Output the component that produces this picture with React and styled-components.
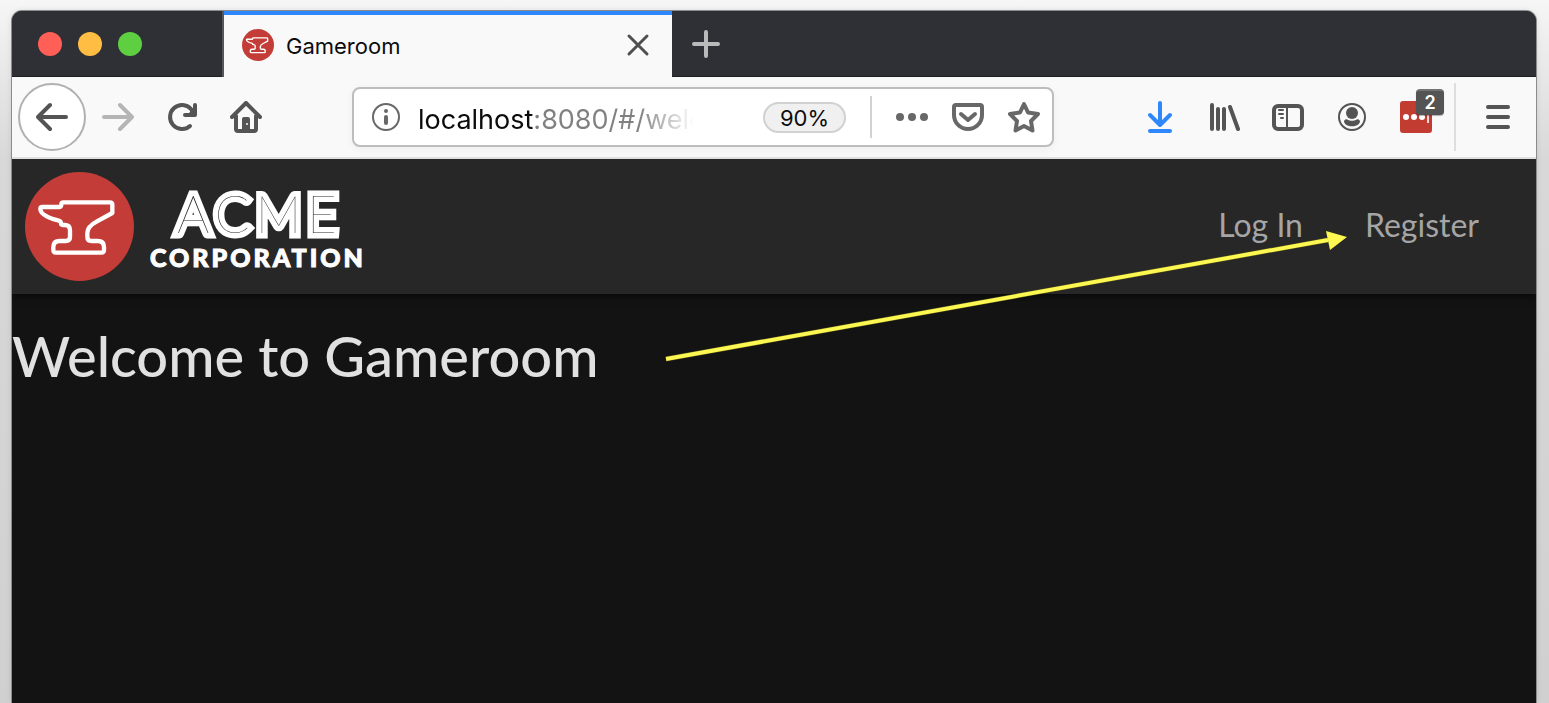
import React from "react";
import styled, { createGlobalStyle } from "styled-components";

const ui = `Inter, "Liberation Sans", sans-serif`;
const site = `Lato, "Liberation Sans", sans-serif`;

const GlobalStyle = createGlobalStyle`
  *, *::before, *::after { box-sizing: border-box; }
  body { margin: 0; background: #fafafa; }
  button { border: 0; margin: 0; padding: 0; background: none; font: inherit; color: inherit; }
  svg { display: block; }
`;

const Desktop = styled.div`
  display: flex;
  min-height: 100vh;
  padding: 11px 13px 0 12px;
  overflow: hidden;
  background: linear-gradient(180deg, #f6f6f6 0, #ececec 50px, #d8d8d8 160px, #d0d0d0 100%);
`;

const BrowserWindow = styled.div`
  position: relative;
  flex: 1;
  min-width: 0;
  display: flex;
  flex-direction: column;
  border-radius: 10px 10px 0 0;
  background: #131313;
  box-shadow: 0 0 0 1px #8c8c8c, 0 0 6px rgba(0, 0, 0, 0.12);
`;

const TabBar = styled.div`
  display: flex;
  height: 66px;
  overflow: hidden;
  border-radius: 10px 10px 0 0;
  background: #2f3035;
  box-shadow: inset 0 -1px #1f2024;
`;

const TrafficLights = styled.div`
  display: flex;
  align-items: center;
  gap: 16px;
  width: 212px;
  padding-left: 26px;
  border-right: 2px solid #55565b;
`;

const Light = styled.button`
  width: 24px;
  height: 24px;
  border-radius: 50%;
  background: ${(p) => p.$color};
`;

const Tab = styled.div`
  display: flex;
  align-items: center;
  gap: 12px;
  width: 448px;
  padding: 0 18px 2px;
  border-top: 4px solid #2e87fb;
  background: #f9f9fa;
  color: #0c0c0d;
  font: 22px/32px ${ui};
`;

const TabTitle = styled.span`
  flex: 1;
  padding-top: 2px;
`;

const TabButton = styled.button`
  display: grid;
  place-items: center;
  width: ${(p) => p.$width}px;
  color: ${(p) => p.$color};
`;

const Toolbar = styled.div`
  display: flex;
  align-items: center;
  height: 82px;
  padding: 0 6px;
  border-bottom: 2px solid #e0e0e1;
  background: #f9f9fa;
`;

const ToolButton = styled.button`
  position: relative;
  display: grid;
  place-items: center;
  width: 64px;
  height: 64px;
  color: ${(p) => p.$color || "#545455"};
`;

const BackButton = styled(ToolButton)`
  width: 68px;
  height: 68px;
  border: 2px solid #b1b1b2;
  border-radius: 50%;
  background: #fff;
`;

const Badge = styled.span`
  position: absolute;
  top: 4px;
  right: 4px;
  width: 28px;
  height: 26px;
  border-top: 2px solid #737373;
  border-radius: 4px;
  background: #545454;
  box-shadow: 0 1px 1px rgba(0, 0, 0, 0.3);
  color: #fff;
  font: 600 18px/24px ${ui};
  text-align: center;
`;

const Divider = styled.span`
  width: 2px;
  height: ${(p) => p.$height}px;
  margin: 0 ${(p) => p.$right}px 0 ${(p) => p.$left}px;
  background: ${(p) => p.$color};
`;

const AddressBar = styled.form`
  display: flex;
  flex: 1;
  align-items: center;
  min-width: 0;
  height: 60px;
  margin: 0 74px;
  border: 2px solid #bdbdbe;
  border-radius: 8px;
  background: #fff;
  box-shadow: 0 2px 8px rgba(0, 0, 0, 0.05);
`;

const AddressInput = styled.input`
  width: 280px;
  min-width: 0;
  height: 44px;
  padding: 4px 0 0;
  border: 0;
  outline: 0;
  background: linear-gradient(90deg, #0c0c0d 116px, #808080 116px, #808080 220px, transparent 276px);
  background-clip: text;
  -webkit-background-clip: text;
  color: transparent;
  font: 27px/40px ${ui};
`;

const Zoom = styled.button`
  width: 83px;
  height: 31px;
  margin-left: auto;
  padding-top: 1px;
  border: 2px solid #d1d1d2;
  border-radius: 16px;
  background: #f0f0f1;
  color: #0c0c0d;
  font: 22px/26px ${ui};
`;

const AddressButton = styled.button`
  display: grid;
  place-items: center;
  width: ${(p) => p.$width || 56}px;
  height: 56px;
  color: #686869;
`;

const SiteHeader = styled.header`
  display: flex;
  align-items: center;
  justify-content: space-between;
  height: 135px;
  padding: 0 57px 0 13px;
  background: #272727;
  box-shadow: 0 2px 8px rgba(0, 0, 0, 0.6);
  clip-path: inset(0 0 -12px 0);
`;

const Brand = styled.a`
  display: flex;
  align-items: center;
  gap: 16px;
  color: #fff;
  text-decoration: none;
`;

const Wordmark = styled.span`
  display: flex;
  flex-direction: column;
  padding-top: 4px;
`;

/* Inline lettering: a broad white outline with a hairline core. */
const BrandName = styled.svg`
  overflow: visible;

  text {
    fill: #272727;
    stroke: #fff;
    stroke-width: 11px;
    stroke-miterlimit: 2;
    paint-order: stroke fill;
    font: 100 51px ${site};
    letter-spacing: 6px;
  }
`;

const BrandKind = styled.span`
  font: 900 25px/28px ${site};
  letter-spacing: 3px;
  -webkit-text-stroke: 1px #fff;
`;

const Nav = styled.nav`
  display: flex;
  gap: 62px;
  padding-bottom: 4px;
`;

const NavLink = styled.a`
  color: #a5a5a5;
  font: 32px/40px ${site};
  text-decoration: none;
`;

const Main = styled.main`
  flex: 1;
`;

const Title = styled.h1`
  margin: 30px 0;
  color: #e1e1e1;
  font: 500 56px/64px ${site};
`;

const Pointer = styled.svg`
  position: absolute;
  top: 219px;
  right: 188px;
  pointer-events: none;
`;

function Anvil({ size, line }) {
  return (
    <svg width={size} height={size} viewBox="75 51 327 327" aria-hidden="true">
      <circle cx="238.5" cy="214.5" r="163.5" fill="#c33c37" />
      <path
        d="M190 142H330q7 0 7 7V174L291 199Q262 214 262 234V245Q262 258 275 258H293Q312 258 312 276V285q0 8-8 8H168q-8 0-8-8V276Q160 258 179 258H197Q210 258 210 246V226Q210 211 196 210H188Q183 210 183 205Q183 198 174 196C143 188 121 176 121 161Q121 156 127 156H179Q184 156 184 148Q184 142 190 142Z"
        fill="none"
        stroke="#fff"
        strokeWidth={line}
        strokeLinejoin="round"
      />
    </svg>
  );
}

function Icon({ children, width = 32, height = 32, weight = 4, box = "0 0 32 32" }) {
  return (
    <svg
      width={width}
      height={height}
      viewBox={box}
      fill="none"
      stroke="currentColor"
      strokeWidth={weight}
      strokeLinecap="round"
      strokeLinejoin="round"
      aria-hidden="true"
    >
      {children}
    </svg>
  );
}

export default function App() {
  return (
    <Desktop>
      <GlobalStyle />
      <BrowserWindow>
        <TabBar>
          <TrafficLights>
            <Light $color="#ff5f57" aria-label="Close window" />
            <Light $color="#ffbd44" aria-label="Minimize window" />
            <Light $color="#5fcf42" aria-label="Zoom window" />
          </TrafficLights>
          <Tab>
            <Anvil size={32} line={14} />
            <TabTitle>Gameroom</TabTitle>
            <TabButton $width={32} $color="#4f4f50" aria-label="Close tab">
              <Icon weight={3}><path d="M7 7L25 25M25 7L7 25" /></Icon>
            </TabButton>
          </Tab>
          <TabButton $width={68} $color="#b9babb" aria-label="New tab">
            <Icon><path d="M16 4V28M4 16H28" /></Icon>
          </TabButton>
        </TabBar>

        <Toolbar>
          <BackButton aria-label="Back">
            <Icon><path d="M30 16H3M14 4L2 16L14 28" /></Icon>
          </BackButton>
          <ToolButton $color="#b5b5b6" aria-label="Forward">
            <Icon><path d="M2 16H29M18 4L30 16L18 28" /></Icon>
          </ToolButton>
          <ToolButton aria-label="Reload">
            <Icon>
              <path d="M24 25A12 12 0 1 1 25 8L28 13" />
              <path d="M29 4V14H19" />
              <path d="M29 6V14H21Z" fill="currentColor" stroke="none" />
            </Icon>
          </ToolButton>
          <ToolButton aria-label="Home">
            <Icon>
              <path d="M2 16L16 2L30 16M6 15V28Q6 30 8 30H24Q26 30 26 28V15" />
              <path d="M12 30V18Q12 16 14 16H18Q20 16 20 18V30Z" fill="currentColor" stroke="none" />
              <circle cx="17" cy="23" r="1" fill="#f9f9fa" stroke="none" />
            </Icon>
          </ToolButton>

          <AddressBar onSubmit={(e) => e.preventDefault()}>
            <AddressButton type="button" $width={64} aria-label="Site information">
              <Icon weight={2}>
                <circle cx="16" cy="16" r="13" />
                <path d="M16 16V22" strokeWidth="4" />
                <circle cx="16" cy="10" r="2" fill="currentColor" stroke="none" />
              </Icon>
            </AddressButton>
            <AddressInput aria-label="Address" defaultValue="localhost:8080/#/welcome" spellCheck={false} />
            <Zoom type="button">90%</Zoom>
            <Divider $height={42} $left={24} $right={12} $color="#d2d2d3" />
            <AddressButton type="button" aria-label="Page actions">
              <Icon>
                <g fill="currentColor" stroke="none">
                  <circle cx="4" cy="16" r="4" />
                  <circle cx="16" cy="16" r="4" />
                  <circle cx="28" cy="16" r="4" />
                </g>
              </Icon>
            </AddressButton>
            <AddressButton type="button" aria-label="Save to Pocket">
              <Icon>
                <path d="M4 4H28Q30 4 30 6V14A14 14 0 0 1 2 14V6Q2 4 4 4Z" />
                <path d="M9 13L16 19L23 13" />
              </Icon>
            </AddressButton>
            <AddressButton type="button" aria-label="Bookmark this page">
              <Icon>
                <path d="M16 3L20 11.5L30 13L23 20L24.5 29.5L16 25L7.5 29.5L9 20L2 13L12 11.5Z" />
              </Icon>
            </AddressButton>
          </AddressBar>

          <ToolButton $color="#2e87fb" aria-label="Downloads">
            <Icon><path d="M16 2V24M6 14L16 24L26 14M6 30H26" /></Icon>
          </ToolButton>
          <ToolButton aria-label="Library">
            <Icon><path d="M4 4V28M10 8V28M16 8V28M22 6L30 28" /></Icon>
          </ToolButton>
          <ToolButton aria-label="Sidebars">
            <Icon>
              <rect x="2" y="5" width="28" height="23" rx="4" />
              <path d="M15 5V27" strokeWidth="2" strokeLinecap="butt" />
              <path d="M7 9H11M7 13H11M9 17H11" strokeWidth="2" />
            </Icon>
          </ToolButton>
          <ToolButton aria-label="Account">
            <Icon weight={2}>
              <circle cx="16" cy="16" r="13" />
              <circle cx="16" cy="12" r="6" fill="currentColor" stroke="none" />
              <path d="M8 20C9 18 11 18 12 19C14 20 18 20 20 19C21 18 23 18 24 20C24 27 8 27 8 20Z" fill="currentColor" stroke="none" />
            </Icon>
          </ToolButton>
          <ToolButton aria-label="Password manager">
            <Icon>
              <rect width="32" height="32" rx="3" fill="#c33c32" stroke="none" />
              <g fill="#fff" stroke="none">
                <circle cx="6" cy="16" r="3" />
                <circle cx="14" cy="16" r="3" />
                <circle cx="22" cy="16" r="3" />
                <rect x="27" y="10" width="2" height="12" opacity="0.8" />
              </g>
            </Icon>
            <Badge>2</Badge>
          </ToolButton>
          <Divider $height={68} $left={6} $right={10} $color="#dededf" />
          <ToolButton aria-label="Open menu">
            <Icon><path d="M6 6H26M6 16H26M6 26H26" /></Icon>
          </ToolButton>
        </Toolbar>

        <SiteHeader>
          <Brand href="#/">
            <Anvil size={109} line={13} />
            <Wordmark>
              <BrandName width="216" height="56">
                <text x="27" y="46">ACME</text>
              </BrandName>
              <BrandKind>CORPORATION</BrandKind>
            </Wordmark>
          </Brand>
          <Nav>
            <NavLink href="#/login">Log In</NavLink>
            <NavLink href="#/register">Register</NavLink>
          </Nav>
        </SiteHeader>

        <Main>
          <Title>Welcome to Gameroom</Title>
        </Main>

        <Pointer width="684" height="134" viewBox="0 0 684 134" aria-hidden="true">
          <path d="M2 141L664 22" stroke="#55531c" strokeWidth="5" transform="translate(0 -12)" />
          <path d="M2 129L664 10" stroke="#fdf851" strokeWidth="4" />
          <path d="M662 1L683 7L666 20Z" fill="#fdf851" />
        </Pointer>
      </BrowserWindow>
    </Desktop>
  );
}
